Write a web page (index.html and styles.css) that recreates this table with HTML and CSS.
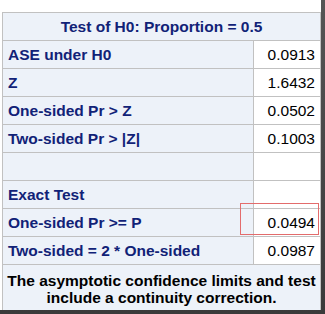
FILE: index.html
```html
<!DOCTYPE html>
<html>
<head>
<meta charset="utf-8">
<link rel="stylesheet" href="styles.css">
</head>
<body>
<div class="frame">
  <table class="tbl">
    <thead>
      <tr class="row"><th colspan="2" class="title">Test of H0: Proportion = 0.5</th></tr>
    </thead>
    <tbody>
      <tr class="row"><th class="lbl">ASE under H0</th><td class="val">0.0913</td></tr>
      <tr class="row"><th class="lbl">Z</th><td class="val">1.6432</td></tr>
      <tr class="row"><th class="lbl">One-sided Pr &gt; Z</th><td class="val">0.0502</td></tr>
      <tr class="row"><th class="lbl">Two-sided Pr &gt; |Z|</th><td class="val">0.1003</td></tr>
      <tr class="row"><th class="lbl">&nbsp;</th><td class="val"></td></tr>
      <tr class="row"><th class="lbl">Exact Test</th><td class="val"></td></tr>
      <tr class="row"><th class="lbl">One-sided Pr &gt;= P</th><td class="val">0.0494</td></tr>
      <tr class="row"><th class="lbl">Two-sided = 2 * One-sided</th><td class="val">0.0987</td></tr>
    </tbody>
    <tfoot>
      <tr class="foot"><td colspan="2" class="note">The asymptotic confidence limits and test include a continuity correction.</td></tr>
    </tfoot>
  </table>
  <div class="mark"></div>
</div>
</body>
</html>
```
FILE: styles.css
```css
html, body {
  margin: 0;
  padding: 0;
}
body {
  background: linear-gradient(#555, #3a3a3a);
  width: 325px;
  height: 314px;
  overflow: hidden;
  font-family: "Liberation Sans", Arial, sans-serif;
}
.frame {
  position: relative;
  width: 321px;
  height: 310px;
  background: #fff;
  padding-top: 12px;
  padding-left: 2px;
  box-sizing: border-box;
  overflow: hidden;
}
.tbl {
  border-collapse: collapse;
  width: 319px;
  font-size: 15.5px;
}
.tbl th, .tbl td {
  border: 1px solid #c1c1c1;
  padding: 0 5px;
}
.row {
  height: 28px;
}
.title {
  background: #edf2f9;
  color: #112277;
  font-weight: bold;
  text-align: center;
}
.lbl {
  background: #edf2f9;
  color: #112277;
  font-weight: bold;
  text-align: left;
  width: 240px;
}
.val {
  background: #fff;
  color: #000;
  text-align: right;
}
.foot {
  height: 48px;
}
.tbl .note {
  background: #edf2f9;
  color: #000;
  font-weight: bold;
  text-align: center;
  line-height: 17px;
  padding: 0;
}
.mark {
  position: absolute;
  left: 240px;
  top: 203px;
  width: 79px;
  height: 32px;
  border: 1px solid #e36c6c;
  box-sizing: border-box;
}
```
